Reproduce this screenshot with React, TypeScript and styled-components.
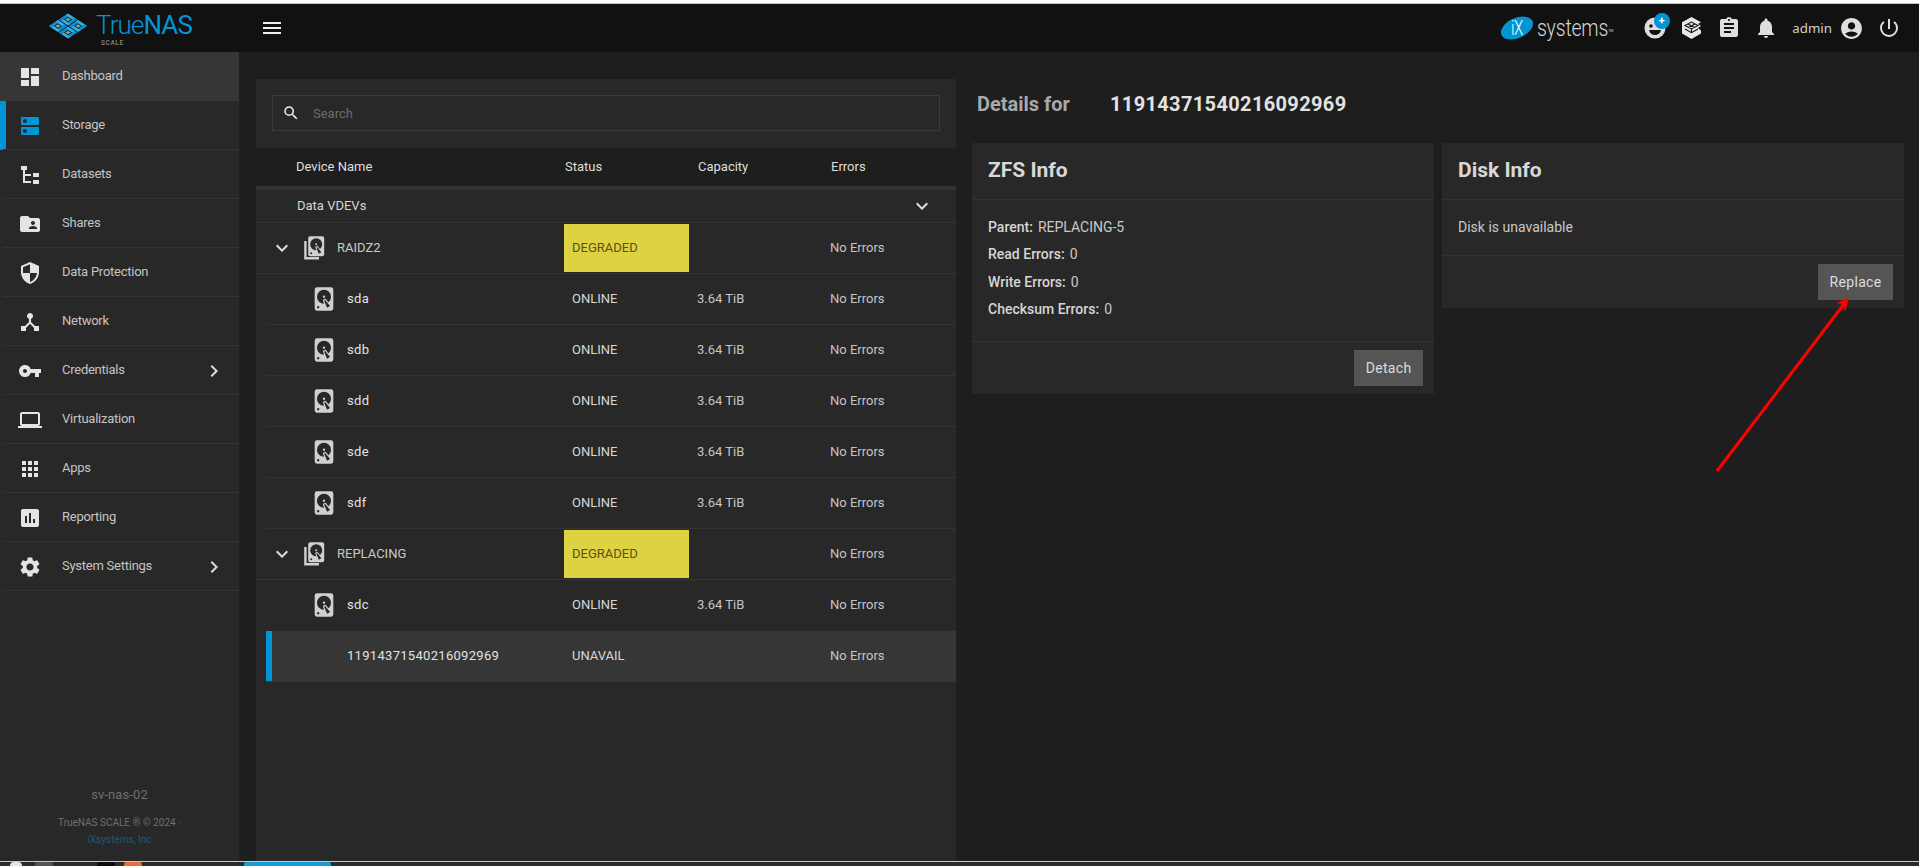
import React from "react";
import styled, { createGlobalStyle } from "styled-components";
import {
  MdDashboard, MdDns, MdFolderShared, MdSecurity, MdDeviceHub, MdVpnKey, MdLaptop, MdApps,
  MdAssessment, MdSettings, MdChevronRight, MdExpandMore, MdSearch, MdMenu, MdAccountCircle,
  MdPowerSettingsNew, MdAssignment, MdNotifications,
} from "react-icons/md";

const Global = createGlobalStyle`
  html, body { margin: 0; padding: 0; background: #fff; }
  * { box-sizing: border-box; }
  body { font-family: Roboto, "Liberation Sans", sans-serif; }
`;

const Page = styled.div`
  width: 1919px; height: 866px; position: relative; overflow: hidden;
  display: flex; flex-direction: column; background: #1e1e1e;
`;
const TopStrip = styled.div`height: 4px; background: #fff; border-bottom: 1px solid #c4c4c4;`;
const TopBar = styled.header`height: 48px; background: #111; display: flex; align-items: center; color: #e4e4e4;`;
const Brand = styled.div`width: 240px; display: flex; align-items: flex-start; padding-left: 48px; height: 100%;`;
const BrandMark = styled.svg`width: 40px; height: 26px; margin-top: 9px; flex: none;`;
const BrandText = styled.div`
  margin-left: 8px; display: flex; flex-direction: column; color: #0095d5;
`;
const BrandName = styled.div`font-size: 26px; line-height: 30px; margin-top: 6px; letter-spacing: -0.9px; font-weight: 300;`;
const BrandStrong = styled.span`font-weight: 400;`;
const BrandSub = styled.div`font-size: 6.5px; line-height: 7px; color: #8a8a8a; margin-left: 5px; margin-top: 0; letter-spacing: .6px; font-weight: 500;`;
const MenuSlot = styled.div`margin-left: 20px; display: flex; color: #f0f0f0; font-size: 24px;`;
const Right = styled.div`margin-left: auto; display: flex; align-items: center; padding-right: 18px;`;
const IxLogo = styled.div`display: flex; align-items: center; margin-right: 23px;`;
const IxOval = styled.div`
  width: 34px; height: 20px; border-radius: 50%; background: #0095d5; transform: rotate(-24deg);
  display: flex; align-items: center; justify-content: center;
`;
const IxLetters = styled.span`transform: rotate(24deg) scaleY(1.35); color: #fff; font-size: 15px; font-weight: 300; letter-spacing: -.5px;`;
const IxWord = styled.span`margin-left: 3px; font-size: 19.5px; font-weight: 300; color: #d4d4d4; letter-spacing: -0.2px; transform: scaleY(1.2);`;
const IxTm = styled.sup`font-size: 3.5px; color: #d4d4d4; align-self: flex-start; margin-top: 12px;`;
const IconSlot = styled.div`width: 37px; display: flex; justify-content: center; position: relative; font-size: 24px; color: #dedede;`;
const Badge = styled.span`
  position: absolute; left: 17.5px; top: -4px; width: 16px; height: 16px; border-radius: 50%; background: #0095d5;
  color: #fff; font-size: 11px; font-weight: 700; line-height: 15px; text-align: center;
`;
const AdminName = styled.span`margin-left: 8px; font-family: "Noto Sans", sans-serif; font-size: 13.3px; color: #cfcfcf;`;
const AccountIcon = styled.div`margin-left: 7px; display: flex; font-size: 25px; color: #dedede;`;
const PowerIcon = styled.div`margin-left: 13px; display: flex; font-size: 24px; color: #dedede;`;

const Body = styled.div`flex: 1; display: flex; min-height: 0;`;
const Sidebar = styled.nav`width: 239px; flex: none; background: #282828; display: flex; flex-direction: column;`;
const NavItem = styled.div<{ $active?: boolean; $hover?: boolean }>`
  height: 49px; flex: none; display: flex; align-items: center; position: relative;
  background: ${p => (p.$hover ? "#363636" : "transparent")};
  box-shadow: ${p => (p.$active ? "inset 6px 0 0 #0095d5" : "none")};
  color: #c4c4c4; font-size: 13px;
  &::after { content: ""; position: absolute; left: 3px; right: 0; bottom: 0; height: 1px; background: ${p => (p.$hover ? "transparent" : "#333")}; }
`;
const NavIcon = styled.div<{ $active?: boolean }>`
  width: 60px; margin-right: 2px; display: flex; justify-content: center; font-size: 24px;
  color: ${p => (p.$active ? "#0095d5" : "#e4e4e4")};
`;
const NavLabel = styled.span`margin-bottom: 2px; letter-spacing: -0.25px;`;
const NavChevron = styled.div`margin-left: auto; margin-right: 13px; display: flex; font-size: 24px; color: #dcdcdc;`;
const SideFoot = styled.div`margin-top: auto; padding-bottom: 13px; text-align: center; color: #6f6f6f;`;
const Host = styled.div`font-size: 13px; line-height: 16px; margin-bottom: 11px; letter-spacing: .1px;`;
const Copy = styled.div`font-size: 10px; line-height: 17px;`;
const Dash = styled.span`color: #1d5a78;`;
const Vendor = styled.div`font-size: 10px; line-height: 17px; color: #1d5a78;`;

const Main = styled.main`flex: 1; display: flex; padding: 27px 15px 0 17px; gap: 16px; min-width: 0;`;
const TreePanel = styled.section`width: 700px; flex: none; background: #282828; display: flex; flex-direction: column;`;
const SearchWrap = styled.div`height: 69px; padding: 16px 16px 0 16px;`;
const SearchBox = styled.div`
  height: 36px; border: 1px solid #3a3a3a; display: flex; align-items: center; padding-left: 9px;
  color: #6c6c6c; font-size: 13px;
`;
const SearchGlyph = styled.div`display: flex; font-size: 18px; color: #efefef; margin-right: 13px;`;
const HeadRow = styled.div`
  height: 42px; background: #1e1e1e; border-bottom: 4px solid #333; padding-bottom: 2px;
  display: grid; grid-template-columns: 308px 133px 133px 126px; align-items: center;
  font-size: 13px; color: #dedede;
`;
const HeadCell = styled.div<{ $first?: boolean }>`padding-left: ${p => (p.$first ? "40px" : "1px")};`;
const SectionRow = styled.div`
  height: 33px; border-bottom: 1px solid #333; display: flex; align-items: center; justify-content: space-between;
  padding: 0 22px 0 41px; font-size: 13px; color: #d6d6d6;
`;
const SectionLabel = styled.span`margin-bottom: 2px;`;
const SectionChevron = styled.div`display: flex; font-size: 24px; color: #dedede;`;
const Row = styled.div<{ $inset?: boolean; $selected?: boolean; $last?: boolean }>`
  height: 51px; flex: none; display: grid; align-items: center; font-size: 13px; color: #c8c8c8;
  margin-left: ${p => (p.$inset ? "10px" : "0")};
  grid-template-columns: ${p => (p.$inset ? "298px" : "308px")} 133px 133px 126px;
  border-bottom: 1px solid ${p => (p.$selected || p.$last ? "transparent" : "#333")};
  background: ${p => (p.$selected ? "#363636" : "transparent")};
  box-shadow: ${p => (p.$selected ? "inset 6px 0 0 #0095d5" : "none")};
`;
const NameCell = styled.div<{ $inset?: boolean }>`
  display: flex; align-items: center; padding-left: ${p => (p.$inset ? "44px" : "14px")};
`;
const Expand = styled.div`display: flex; font-size: 24px; color: #dedede; margin-right: 9px;`;
const StackIcon = styled.svg`width: 22px; height: 26px; flex: none; margin-right: 12px;`;
const DiskIcon = styled.svg`width: 28px; height: 28px; flex: none; margin-right: 9px;`;
const IconGap = styled.div`width: 28px; flex: none; margin-right: 9px;`;
const DeviceName = styled.span`color: #e2e2e2; letter-spacing: .3px; margin-bottom: 2px;`;
const GroupName = styled.span`color: #c8c8c8; margin-bottom: 2px;`;
const StatusCell = styled.div<{ $warn?: boolean }>`
  padding: 0 0 2px 8px; align-self: center; display: flex; align-items: center;
  height: ${p => (p.$warn ? "48px" : "auto")};
  width: ${p => (p.$warn ? "125px" : "auto")};
  background: ${p => (p.$warn ? "#ded242" : "transparent")};
  color: ${p => (p.$warn ? "#55521f" : "#d8d8d8")};
`;
const PlainCell = styled.div`color: #c4c4c4; padding-bottom: 2px;`;

const DetailCol = styled.section`flex: 1; min-width: 0; display: flex; flex-direction: column;`;
const DetailHead = styled.div`height: 64px; padding-left: 5px; display: flex; font-size: 20px; font-weight: 700; line-height: 50px;`;
const DetailLabel = styled.span`width: 133px; color: #a9a9a9; flex: none;`;
const DetailId = styled.span`color: #e2e2e2; letter-spacing: .35px;`;
const Cards = styled.div`display: flex; gap: 8px; align-items: flex-start;`;
const Card = styled.article`width: 462px; background: #282828;`;
const CardHead = styled.h2`
  margin: 0; height: 57px; border-bottom: 1px solid #333; padding: 0 0 2px 16px; display: flex; align-items: center;
  font-size: 21px; font-weight: 700; color: #d8d8d8;
`;
const CardBody = styled.div<{ $tall?: boolean }>`
  height: ${p => (p.$tall ? "142px" : "56px")}; padding: ${p => (p.$tall ? "14px 16px 0" : "0 16px 2px")};
  border-bottom: 1px solid #333; font-size: 14px; color: #c8c8c8;
  display: flex; flex-direction: column; justify-content: ${p => (p.$tall ? "flex-start" : "center")};
`;
const InfoLine = styled.div`height: 27.3px; line-height: 27.3px; display: flex; gap: 5px;`;
const InfoKey = styled.b`font-weight: 500; color: #d6d6d6;`;
const CardFoot = styled.div`height: 52px; padding: 8px 11px; display: flex; justify-content: flex-end;`;
const Button = styled.button`
  height: 36px; border: 0; background: #555; color: #dcdcdc; font: 400 14px Roboto, sans-serif; padding: 0 11.6px; letter-spacing: .3px;
`;
const Arrow = styled.svg`position: absolute; left: 1700px; top: 290px; width: 160px; height: 190px;`;

const Taskbar = styled.footer`height: 5px; background: #2b2b2b; border-top: 1px solid #c8c8c8; display: flex; flex: none;`;
const TaskItem = styled.div<{ $left: number; $width: number; $color: string; $round?: boolean }>`
  margin-left: ${p => p.$left}px; width: ${p => p.$width}px; background: ${p => p.$color};
  border-radius: ${p => (p.$round ? "6px 6px 0 0" : "2px 2px 0 0")}; flex: none;
`;

const DISK = "M6,2H18A2,2 0 0,1 20,4V20A2,2 0 0,1 18,22H6A2,2 0 0,1 4,20V4A2,2 0 0,1 6,2M12,4A6,6 0 0,0 6,10C6,13.31 8.69,16 12.1,16L11.22,13.77C10.95,13.29 11.11,12.68 11.59,12.4L12.45,11.9C12.93,11.63 13.54,11.79 13.82,12.27L15.74,14.69C17.12,13.59 18,11.9 18,10A6,6 0 0,0 12,4M12,9A1,1 0 0,1 13,10A1,1 0 0,1 12,11A1,1 0 0,1 11,10A1,1 0 0,1 12,9M7,18A1,1 0 0,0 6,19A1,1 0 0,0 7,20A1,1 0 0,0 8,19A1,1 0 0,0 7,18M12.09,13.27L14.58,19.58L17.17,18.08L12.95,12.77L12.09,13.27Z";

const Disk = () => (
  <DiskIcon viewBox="0 0 24 24"><path d={DISK} fill="#d0d0d0" /></DiskIcon>
);
const DiskStack = () => (
  <StackIcon viewBox="0 0 22 26">
    <g transform="translate(1.2,-0.8)"><path d={DISK} fill="#d0d0d0" /></g>
    <path d="M2.400 6V23.300H16" fill="none" stroke="#d0d0d0" strokeWidth="2.400" />
  </StackIcon>
);

const TrueMark = () => {
  const quads = [[-5, -5], [5, -5], [-5, 5], [5, 5]];
  return (
    <BrandMark viewBox="-20 -13 40 26">
      <g transform="matrix(1,.65,-1,.65,0,0)">
        {quads.map(([u, v]) => (
          <g key={`${u}${v}`} transform={`translate(${u},${v})`}>
            <rect x="-4.7" y="-4.7" width="7" height="2.6" fill="#2fb4e6" />
            <rect x="2.1" y="-4.7" width="2.6" height="7" fill="#0a8fd0" />
            <rect x="-2.3" y="2.1" width="7" height="2.6" fill="#2fb4e6" />
            <rect x="-4.7" y="-2.3" width="2.6" height="7" fill="#0a8fd0" />
            <rect x="-1.4" y="-1.4" width="2.8" height="2.8" fill="#9a9a9a" />
          </g>
        ))}
      </g>
    </BrandMark>
  );
};

const Smile = () => (
  <svg width="22" height="22" viewBox="0 0 22 22">
    <circle cx="11" cy="11" r="10.5" fill="#dedede" />
    <circle cx="7" cy="9" r="1.8" fill="#111" />
    <path d="M5 13h12c-.6 3.4-3 5-6 5s-5.400-1.600-6-5z" fill="#111" />
  </svg>
);
const Cube = () => (
  <svg width="24" height="24" viewBox="0 0 24 24">
    <path d="M11.500 1 21 6.200 18 8 21 10 18 12 21 14.500V17.500L11.500 23 2 17.500V6.200z" fill="#e8e8e8" />
    <path d="M5 9.500 11.500 13 18 9.500 11.500 6zM5 13l6.500 3.700L18 13M11.500 13v3.700M8 8l6.500 3.500M15 8l-6.500 3.500" fill="none" stroke="#111" strokeWidth="1.100" />
  </svg>
);
const DatasetGlyph = () => (
  <svg width="18" height="18" viewBox="0 0 18 18">
    <path d="M0 0h6v4H0zM12 7h6v4h-6zM12 14h6v4h-6z" fill="#e4e4e4" />
    <path d="M3 4v12h7M3 9h7" fill="none" stroke="#e4e4e4" strokeWidth="2" />
  </svg>
);

const nav = [
  { label: "Dashboard", icon: <MdDashboard />, hover: true },
  { label: "Storage", icon: <MdDns />, active: true },
  { label: "Datasets", icon: <DatasetGlyph /> },
  { label: "Shares", icon: <MdFolderShared /> },
  { label: "Data Protection", icon: <MdSecurity /> },
  { label: "Network", icon: <MdDeviceHub /> },
  { label: "Credentials", icon: <MdVpnKey />, more: true },
  { label: "Virtualization", icon: <MdLaptop /> },
  { label: "Apps", icon: <MdApps /> },
  { label: "Reporting", icon: <MdAssessment /> },
  { label: "System Settings", icon: <MdSettings />, more: true },
];

const GroupRow = ({ name }: { name: string }) => (
  <Row>
    <NameCell>
      <Expand><MdExpandMore /></Expand>
      <DiskStack />
      <GroupName>{name}</GroupName>
    </NameCell>
    <StatusCell $warn>DEGRADED</StatusCell>
    <PlainCell />
    <PlainCell>No Errors</PlainCell>
  </Row>
);
const DiskRow = ({ name, last }: { name: string; last?: boolean }) => (
  <Row $inset $last={last}>
    <NameCell $inset>
      <Disk />
      <DeviceName>{name}</DeviceName>
    </NameCell>
    <StatusCell>ONLINE</StatusCell>
    <PlainCell>3.64 TiB</PlainCell>
    <PlainCell>No Errors</PlainCell>
  </Row>
);

export default function App() {
  return (
    <Page>
      <Global />
      <TopStrip />
      <TopBar>
        <Brand>
          <TrueMark />
          <BrandText>
            <BrandName>True<BrandStrong>NAS</BrandStrong></BrandName>
            <BrandSub>SCALE</BrandSub>
          </BrandText>
        </Brand>
        <MenuSlot><MdMenu /></MenuSlot>
        <Right>
          <IxLogo>
            <IxOval><IxLetters>iX</IxLetters></IxOval>
            <IxWord>systems</IxWord>
            <IxTm>TM</IxTm>
          </IxLogo>
          <IconSlot><Smile /><Badge>+</Badge></IconSlot>
          <IconSlot><Cube /></IconSlot>
          <IconSlot><MdAssignment /></IconSlot>
          <IconSlot><MdNotifications /></IconSlot>
          <AdminName>admin</AdminName>
          <AccountIcon><MdAccountCircle /></AccountIcon>
          <PowerIcon><MdPowerSettingsNew /></PowerIcon>
        </Right>
      </TopBar>
      <Body>
        <Sidebar>
          {nav.map(n => (
            <NavItem key={n.label} $active={n.active} $hover={n.hover}>
              <NavIcon $active={n.active}>{n.icon}</NavIcon>
              <NavLabel>{n.label}</NavLabel>
              {n.more && <NavChevron><MdChevronRight /></NavChevron>}
            </NavItem>
          ))}
          <SideFoot>
            <Host>sv-nas-02</Host>
            <Copy>TrueNAS SCALE ® © 2024 <Dash>-</Dash></Copy>
            <Vendor>iXsystems, Inc</Vendor>
          </SideFoot>
        </Sidebar>
        <Main>
          <TreePanel>
            <SearchWrap>
              <SearchBox><SearchGlyph><MdSearch /></SearchGlyph>Search</SearchBox>
            </SearchWrap>
            <HeadRow>
              <HeadCell $first>Device Name</HeadCell>
              <HeadCell>Status</HeadCell>
              <HeadCell>Capacity</HeadCell>
              <HeadCell>Errors</HeadCell>
            </HeadRow>
            <SectionRow><SectionLabel>Data VDEVs</SectionLabel><SectionChevron><MdExpandMore /></SectionChevron></SectionRow>
            <GroupRow name="RAIDZ2" />
            <DiskRow name="sda" />
            <DiskRow name="sdb" />
            <DiskRow name="sdd" />
            <DiskRow name="sde" />
            <DiskRow name="sdf" />
            <GroupRow name="REPLACING" />
            <DiskRow name="sdc" last />
            <Row $inset $selected>
              <NameCell $inset>
                <IconGap />
                <DeviceName>11914371540216092969</DeviceName>
              </NameCell>
              <StatusCell>UNAVAIL</StatusCell>
              <PlainCell />
              <PlainCell>No Errors</PlainCell>
            </Row>
          </TreePanel>
          <DetailCol>
            <DetailHead>
              <DetailLabel>Details for</DetailLabel>
              <DetailId>11914371540216092969</DetailId>
            </DetailHead>
            <Cards>
              <Card>
                <CardHead>ZFS Info</CardHead>
                <CardBody $tall>
                  <InfoLine><InfoKey>Parent:</InfoKey>REPLACING-5</InfoLine>
                  <InfoLine><InfoKey>Read Errors:</InfoKey>0</InfoLine>
                  <InfoLine><InfoKey>Write Errors:</InfoKey>0</InfoLine>
                  <InfoLine><InfoKey>Checksum Errors:</InfoKey>0</InfoLine>
                </CardBody>
                <CardFoot><Button>Detach</Button></CardFoot>
              </Card>
              <Card>
                <CardHead>Disk Info</CardHead>
                <CardBody>Disk is unavailable</CardBody>
                <CardFoot><Button>Replace</Button></CardFoot>
              </Card>
            </Cards>
          </DetailCol>
        </Main>
      </Body>
      <Taskbar>
        <TaskItem $left={10} $width={12} $color="#e6e6e6" $round />
        <TaskItem $left={13} $width={18} $color="#5a5246" />
        <TaskItem $left={44} $width={18} $color="#0c0c0c" />
        <TaskItem $left={9} $width={18} $color="#e2703a" />
        <TaskItem $left={102} $width={87} $color="#1c9ad6" />
      </Taskbar>
      <Arrow viewBox="0 0 160 190">
        <line x1="17" y1="181" x2="144" y2="14" stroke="#f00" strokeWidth="3" />
        <polygon points="149,7 145,22 143,15 137,13" fill="#f00" />
      </Arrow>
    </Page>
  );
}
